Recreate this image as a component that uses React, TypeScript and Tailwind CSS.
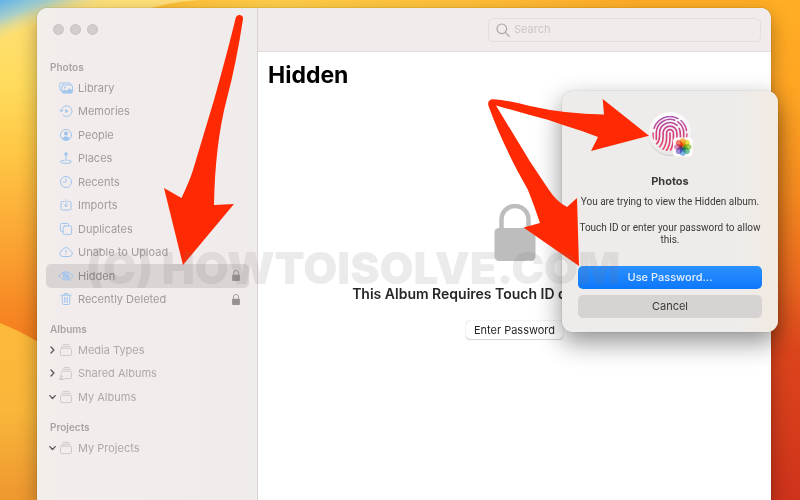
import { ReactNode, useState } from 'react'

interface IconProps {
  className?: string
}

interface SidebarItem {
  name: string
  icon: (props: IconProps) => ReactNode
  locked?: boolean
  expanded?: boolean
}

interface SidebarSection {
  title: string
  listClass: string
  muted: boolean
  items: SidebarItem[]
}

function Glyph({ className, children }: IconProps & { children: ReactNode }) {
  return (
    <svg
      viewBox="0 0 16 16"
      fill="none"
      stroke="currentColor"
      strokeLinecap="round"
      strokeLinejoin="round"
      aria-hidden="true"
      className={className}
    >
      {children}
    </svg>
  )
}

const LibraryIcon = ({ className }: IconProps) => (
  <Glyph className={className}>
    <path d="M3.6 10.6H3a1.2 1.2 0 0 1-1.2-1.2V4.2A1.2 1.2 0 0 1 3 3h8.2a1.2 1.2 0 0 1 1.2 1.2v.4" />
    <rect x="4" y="5" width="10.4" height="8" rx="1.3" />
    <path d="M4.3 11.6l2.5-1.8 1.8 1.3 2.9-2.5 2.7 2.3v.9a1 1 0 0 1-1 1H5.3a1 1 0 0 1-1-1z" fill="currentColor" strokeWidth="0.5" />
    <circle cx="7" cy="7.5" r="0.9" fill="currentColor" stroke="none" />
  </Glyph>
)

const MemoriesIcon = ({ className }: IconProps) => (
  <Glyph className={className}>
    <path d="M3.2 8.4A5.4 5.4 0 1 1 5 12.2" />
    <path d="M1.6 6.9l1.6 1.7 1.8-1.5" />
    <path d="M7.2 6v4.2l3.5-2.1z" fill="currentColor" stroke="none" />
  </Glyph>
)

const PeopleIcon = ({ className }: IconProps) => (
  <Glyph className={className}>
    <circle cx="8" cy="8" r="5.5" />
    <circle cx="8" cy="6.6" r="2" fill="currentColor" stroke="none" />
    <path d="M4.3 11.7c.7-1.7 2.1-2.3 3.7-2.3s3 .6 3.7 2.3c-2 1.9-5.4 1.9-7.4 0z" fill="currentColor" stroke="none" />
  </Glyph>
)

const PlacesIcon = ({ className }: IconProps) => (
  <Glyph className={className}>
    <circle cx="8" cy="4" r="1.8" fill="currentColor" stroke="none" />
    <path d="M8 5.5v5.5" />
    <path d="M6.2 10.2c-2.2.2-3.7.7-3.7 1.5 0 1 2.5 1.6 5.5 1.6s5.5-.6 5.5-1.6c0-.8-1.5-1.3-3.7-1.5" />
  </Glyph>
)

const RecentsIcon = ({ className }: IconProps) => (
  <Glyph className={className}>
    <circle cx="8" cy="8" r="5.5" />
    <path d="M8 4.8v3.4H5.4" />
  </Glyph>
)

const ImportsIcon = ({ className }: IconProps) => (
  <Glyph className={className}>
    <path d="M6 4.5H4.2A1.2 1.2 0 0 0 3 5.7v6.1A1.2 1.2 0 0 0 4.2 13h7.6a1.2 1.2 0 0 0 1.2-1.2V5.7a1.2 1.2 0 0 0-1.2-1.2H10" />
    <path d="M8 2.6v7M6.2 7.9L8 9.7l1.8-1.8" />
  </Glyph>
)

const DuplicatesIcon = ({ className }: IconProps) => (
  <Glyph className={className}>
    <path d="M4.8 10.6H3.6a1.2 1.2 0 0 1-1.2-1.2V3.6a1.2 1.2 0 0 1 1.2-1.2h5.8a1.2 1.2 0 0 1 1.2 1.2v1" />
    <rect x="5.2" y="5" width="8.4" height="8.4" rx="1.3" />
  </Glyph>
)

const CloudIcon = ({ className }: IconProps) => (
  <Glyph className={className}>
    <path d="M4.6 12.5a2.9 2.9 0 0 1-.6-5.7 4.1 4.1 0 0 1 7.9-.4 3.1 3.1 0 0 1-.2 6.1z" />
    <path d="M8 6.3v2.4M8 10.4v.1" />
  </Glyph>
)

const HiddenIcon = ({ className }: IconProps) => (
  <Glyph className={className}>
    <path d="M.9 8C3.2 5 5.5 3.9 8 3.9S12.8 5 15.1 8c-2.3 3-4.6 4.1-7.1 4.1S3.2 11 .9 8z" />
    <circle cx="8" cy="8" r="2.9" />
    <circle cx="8" cy="8" r="1.3" fill="currentColor" />
    <path d="M3.5 3.6l9 8.8" />
  </Glyph>
)

const TrashIcon = ({ className }: IconProps) => (
  <Glyph className={className}>
    <path d="M3 4.2h10M6.2 4V2.6h3.6V4M4 4.4l.5 8.1a1 1 0 0 0 1 1h5a1 1 0 0 0 1-1l.5-8.1" />
    <path d="M6.5 6.4v5M8 6.4v5M9.5 6.4v5" strokeWidth="0.8" />
  </Glyph>
)

const AlbumIcon = ({ className }: IconProps) => (
  <Glyph className={className}>
    <path d="M5.2 2.4h5.6M3.7 4.3h8.6" />
    <rect x="2.5" y="6.2" width="11" height="7.4" rx="1.4" />
  </Glyph>
)

const SharedAlbumIcon = ({ className }: IconProps) => (
  <Glyph className={className}>
    <path d="M6.2 2.4h5M4.7 4.3h8" />
    <path d="M3.3 8.6V7.5a1.3 1.3 0 0 1 1.3-1.3h7.6a1.3 1.3 0 0 1 1.3 1.3v4.8a1.3 1.3 0 0 1-1.3 1.3H6.8" />
    <circle cx="3.3" cy="11.4" r="1.1" />
    <path d="M1 14.2c.3-1.4 4.3-1.4 4.6 0z" />
  </Glyph>
)

const LockIcon = ({ className }: IconProps) => (
  <svg viewBox="0 0 42 57" fill="none" aria-hidden="true" className={className}>
    <path d="M7.5 28V15.5a13.5 13.5 0 0 1 27 0V28" stroke="currentColor" strokeWidth="4.5" />
    <rect x="0.5" y="24" width="41" height="33" rx="4.5" fill="currentColor" />
  </svg>
)

const ChevronIcon = ({ open }: { open: boolean }) => (
  <svg viewBox="0 0 8 8" fill="none" stroke="#5a5655" strokeWidth="1.3" strokeLinecap="round" strokeLinejoin="round" aria-hidden="true" className="h-2 w-2 shrink-0">
    <path d={open ? 'M0.8 2.6l2.7 2.9 2.7-2.9' : 'M2 1l2.9 3-2.9 3'} />
  </svg>
)

const sections: SidebarSection[] = [
  {
    title: 'Photos',
    listClass: 'h-[235px]',
    muted: false,
    items: [
      { name: 'Library', icon: LibraryIcon },
      { name: 'Memories', icon: MemoriesIcon },
      { name: 'People', icon: PeopleIcon },
      { name: 'Places', icon: PlacesIcon },
      { name: 'Recents', icon: RecentsIcon },
      { name: 'Imports', icon: ImportsIcon },
      { name: 'Duplicates', icon: DuplicatesIcon },
      { name: 'Unable to Upload', icon: CloudIcon },
      { name: 'Hidden', icon: HiddenIcon, locked: true },
      { name: 'Recently Deleted', icon: TrashIcon, locked: true },
    ],
  },
  {
    title: 'Albums',
    listClass: 'h-[71px]',
    muted: true,
    items: [
      { name: 'Media Types', icon: AlbumIcon, expanded: false },
      { name: 'Shared Albums', icon: SharedAlbumIcon, expanded: false },
      { name: 'My Albums', icon: AlbumIcon, expanded: true },
    ],
  },
  {
    title: 'Projects',
    listClass: 'h-6',
    muted: true,
    items: [{ name: 'My Projects', icon: AlbumIcon, expanded: true }],
  },
]

function Wallpaper() {
  return (
    <svg viewBox="0 0 800 500" preserveAspectRatio="none" aria-hidden="true" className="absolute inset-0 h-full w-full">
      <defs>
        <linearGradient id="left" x1="0" y1="0" x2="0" y2="1">
          <stop offset="0" stopColor="#ffe07a" />
          <stop offset="0.16" stopColor="#ffdc5e" />
          <stop offset="0.3" stopColor="#ffc845" />
          <stop offset="0.48" stopColor="#fba634" />
          <stop offset="0.66" stopColor="#f5801f" />
        </linearGradient>
        <linearGradient id="leftLow" x1="0" y1="0" x2="0" y2="1">
          <stop offset="0" stopColor="#fdb93a" />
          <stop offset="0.5" stopColor="#f9b63a" />
          <stop offset="1" stopColor="#ee972f" />
        </linearGradient>
        <linearGradient id="top" x1="0" y1="0" x2="1" y2="0">
          <stop offset="0" stopColor="#ffbd35" />
          <stop offset="0.25" stopColor="#ffce49" />
          <stop offset="0.6" stopColor="#ffc13a" />
          <stop offset="1" stopColor="#ffab25" />
        </linearGradient>
        <linearGradient id="right" x1="0" y1="0" x2="0" y2="1">
          <stop offset="0" stopColor="#ffae24" />
          <stop offset="0.22" stopColor="#ffa323" />
          <stop offset="0.38" stopColor="#f98d20" />
          <stop offset="0.56" stopColor="#ee6a1f" />
          <stop offset="0.7" stopColor="#dd451c" />
          <stop offset="1" stopColor="#cf331b" />
        </linearGradient>
        <linearGradient id="sky" gradientUnits="userSpaceOnUse" x1="0" y1="0" x2="14" y2="38">
          <stop offset="0" stopColor="#62b4ea" />
          <stop offset="0.45" stopColor="#a9cfc8" />
          <stop offset="1" stopColor="#ffe07a" stopOpacity="0" />
        </linearGradient>
      </defs>
      <rect width="400" height="500" fill="url(#left)" />
      <path d="M0 0h150L60 12 0 40z" fill="url(#sky)" />
      <path d="M0 323q20 8 40 20v157H0z" fill="url(#leftLow)" />
      <path d="M148 9q22-7 52-9h450v30H148z" fill="url(#top)" />
      <rect x="640" width="160" height="500" fill="url(#right)" />
    </svg>
  )
}

function Sidebar({ selected, onSelect }: { selected: string; onSelect: (name: string) => void }) {
  return (
    <aside className="w-[221px] shrink-0 rounded-tl-[10px] border-r border-[#d9d4d3] bg-linear-to-r from-[#f3efe9] via-[#f2edec] via-10% to-[#f1ecec]">
      <div className="flex h-[43px] items-center gap-[6px] pl-4">
        {['Close', 'Minimize', 'Zoom'].map((label) => (
          <button key={label} aria-label={label} className="h-[11px] w-[11px] rounded-full border border-[#c7c2c1] bg-[#d2cecd]" />
        ))}
      </div>

      <nav className="flex flex-col gap-[10px] pt-2">
        {sections.map((section) => (
          <section key={section.title}>
            <h2 className="pl-[13px] text-[10px] leading-[17px] font-semibold text-[#a9a4a3]">{section.title}</h2>
            <ul className={`mr-2 ml-[9px] grid auto-rows-fr ${section.listClass}`}>
              {section.items.map((item) => {
                const Icon = item.icon
                const isActive = item.name === selected
                return (
                  <li key={item.name}>
                    <a
                      href="#"
                      onClick={() => onSelect(item.name)}
                      className={`flex h-full items-center rounded-[5px] pr-[9px] pl-[3px] text-[11px] ${
                        isActive ? 'bg-[#dad5d4] text-[#8d8887]' : section.muted ? 'text-[#aea9a9]' : 'text-[#a19c9b]'
                      }`}
                    >
                      <span className="flex w-[9px] shrink-0">
                        {item.expanded !== undefined && <ChevronIcon open={item.expanded} />}
                      </span>
                      <Icon className={section.muted ? 'h-4 w-4 shrink-0 text-[#cfcac9]' : 'h-4 w-4 shrink-0 text-[#9fc5ee]'} />
                      <span className="flex-1 pl-1">{item.name}</span>
                      {item.locked && <LockIcon className="h-[11px] w-2 text-[#979291]" />}
                    </a>
                  </li>
                )
              })}
            </ul>
          </section>
        ))}
      </nav>
    </aside>
  )
}

const petals = [
  { angle: 0, color: '#f9a01b' },
  { angle: 45, color: '#e8d51c' },
  { angle: 90, color: '#8cc83c' },
  { angle: 135, color: '#4db78c' },
  { angle: 180, color: '#5aa0dc' },
  { angle: 225, color: '#7d6cc8' },
  { angle: 270, color: '#cf6aa8' },
  { angle: 315, color: '#f0583f' },
]

function TouchIdIcon() {
  return (
    <svg viewBox="0 0 46 46" fill="none" aria-hidden="true" className="h-[46px] w-[46px]">
      <defs>
        <linearGradient id="print" x1="0" y1="0" x2="0" y2="1" gradientUnits="userSpaceOnUse" gradientTransform="scale(46)">
          <stop offset="0.1" stopColor="#a955b4" />
          <stop offset="0.5" stopColor="#d43c7c" />
          <stop offset="0.85" stopColor="#ea4468" />
        </linearGradient>
        <linearGradient id="disc" x1="0" y1="0" x2="0" y2="1">
          <stop offset="0" stopColor="#ffffff" />
          <stop offset="1" stopColor="#e9e7e7" />
        </linearGradient>
        <clipPath id="printClip">
          <circle cx="23" cy="22.5" r="17.8" />
        </clipPath>
      </defs>
      <circle cx="23" cy="23.5" r="21.5" fill="#00000022" />
      <circle cx="23" cy="22.5" r="21.5" fill="url(#disc)" />
      <g clipPath="url(#printClip)" stroke="url(#print)" strokeWidth="1.6" strokeLinecap="round">
        <path d="M7 17.2A17 17 0 0 1 31 7.5" />
        <path d="M34 9.5A17 17 0 0 1 39.6 19.5" />
        <path d="M6 22v6" />
        <path d="M9.3 28.5V22a13.7 13.7 0 0 1 18.5-12.8" />
        <path d="M30.8 10.8A13.7 13.7 0 0 1 36.7 22v8" />
        <path d="M40 23v5" />
        <path d="M9.5 33c2.5-2.5 3.1-5 3.1-8V22a10.4 10.4 0 0 1 17.5-7.6" />
        <path d="M32.2 17.3c1 2 1.2 3.7 1.2 6.7v10" />
        <path d="M12.5 36c2.8-3 3.6-6.5 3.6-10V22a6.9 6.9 0 0 1 13.8 0v11" />
        <path d="M15.8 38.5c3-3.8 3.8-8 3.8-12.5v-4a3.4 3.4 0 0 1 6.8 0v5c0 5-.8 8.5-2.8 12" />
        <path d="M23 22v5c0 5-1.3 9.5-3.8 13" />
      </g>
      <rect x="26" y="26.5" width="19.5" height="19" rx="4" fill="#ffffff" />
      <g transform="translate(35.8 36)">
        {petals.map((petal) => (
          <rect
            key={petal.angle}
            x="-2.8"
            y="-8.7"
            width="5.6"
            height="8.4"
            rx="2.8"
            fill={petal.color}
            opacity="0.8"
            transform={`rotate(${petal.angle})`}
            className="mix-blend-multiply"
          />
        ))}
      </g>
    </svg>
  )
}

function PasswordDialog() {
  return (
    <div
      role="dialog"
      aria-labelledby="dialog-title"
      className="absolute top-[91px] right-[22px] flex w-[216px] flex-col items-center rounded-[11px] bg-linear-to-r from-[#eeeceb] from-82% to-[#f2eadf] px-4 pt-5 pb-[14px] text-center text-[#3b3938] shadow-[0_0_1px_#00000066,0_10px_26px_#00000070]"
    >
      <TouchIdIcon />
      <h2 id="dialog-title" className="mt-4 text-[11px] leading-4 font-bold">Photos</h2>
      <p className="mt-[7px] font-['Roboto',sans-serif] text-[10px] leading-3 whitespace-nowrap">
        You are trying to view the Hidden album.
      </p>
      <p className="mt-[14px] font-['Roboto',sans-serif] text-[10px] leading-3 whitespace-nowrap">
        Touch ID or enter your password to allow
        <br />
        this.
      </p>
      <button className="mt-5 h-[23px] w-full rounded-[5px] bg-linear-to-b from-[#2b90ff] to-[#0b77fb] text-[11px] font-medium text-[#e6f1ff]">
        Use Password...
      </button>
      <button className="mt-[6px] h-[23px] w-full rounded-[5px] bg-[#d6d3d2] text-[11px]">Cancel</button>
    </div>
  )
}

function Arrows() {
  return (
    <svg viewBox="0 0 800 500" preserveAspectRatio="xMinYMin meet" fill="#ff2a04" aria-hidden="true" className="pointer-events-none absolute inset-0 h-full w-full">
      <path d="M235.8 17.5q1-3 4-2.5 3.5.5 3.2 4Q236 65 226.5 100 215 145 214 205l20-1-51 61-19-77 17.5 10Q190 180 193 170L214 100Q228 50 235.8 17.5z" />
      <path d="M493.5 99.3Q507 100 530 106q35 8 74 8.5L602.7 99 649 135.7 591 151l7-14q-18-7-35-12-16-6-33-10L496 105.5l-7-2q0-4 4.5-4.2z" />
      <path d="M488.5 106q-1.5-5 3-6.5 4.5 1 4.5 6Q515 137 530 161.5L549 190q8 12 18 17l10-9 2 68-55.5-38.5 16.5-4.5q-6-18-12-33l-11-20Q499 135 488.5 106z" />
    </svg>
  )
}

export default function App() {
  const [selected, setSelected] = useState('Hidden')

  return (
    <div className="relative flex min-h-screen overflow-hidden pt-2 pr-[29px] pl-[37px] font-['Inter',sans-serif]">
      <Wallpaper />

      {/* Photos window */}
      <div className="relative flex flex-1 rounded-t-[10px] bg-white shadow-[0_0_1px_#00000080,0_8px_20px_#00000055]">
        <Sidebar selected={selected} onSelect={setSelected} />

        <div className="flex min-w-0 flex-1 flex-col">
          <header className="flex h-11 items-center justify-end rounded-tr-[10px] border-b border-[#e3dcdb] bg-[#f1eceb] pr-[10px]">
            <label className="flex h-6 w-[273px] items-center gap-1 rounded-[5px] border border-[#e4dfde] pl-[7px]">
              <svg viewBox="0 0 14 14" fill="none" stroke="#aaa5a4" strokeWidth="1.2" strokeLinecap="round" aria-hidden="true" className="h-[14px] w-[14px] shrink-0">
                <circle cx="5.8" cy="5.8" r="4.8" />
                <path d="M9.3 9.3l4 4" />
              </svg>
              <input type="text" aria-label="Search" placeholder="Search" className="min-w-0 flex-1 bg-transparent text-[11px] outline-none placeholder:text-[#ccc7c6]" />
            </label>
          </header>

          <main className="flex flex-1 flex-col items-center">
            <h1 className="self-start pt-2 pl-[10px] text-[23px] leading-[30px] font-bold text-black">{selected}</h1>
            <LockIcon className="mt-[114px] h-[57px] w-[42px] text-[#bdbdbd]" />
            <p className="mt-[23px] text-[14px] leading-5 font-semibold whitespace-nowrap text-[#272727]">
              This Album Requires Touch ID or Your Password
            </p>
            <button className="mt-[17px] h-[18px] rounded-[4px] bg-white px-2 text-[11px] text-[#272727] shadow-[0_0_1px_#00000066,0_1px_1px_#00000022]">
              Enter Password
            </button>
          </main>
        </div>
      </div>

      <PasswordDialog />
      <Arrows />

      <p className="pointer-events-none absolute top-[243px] left-[86px] text-[44px] leading-[50px] font-black whitespace-nowrap text-[#75706f]/14">
        (C) HOWTOISOLVE.COM
      </p>
    </div>
  )
}
